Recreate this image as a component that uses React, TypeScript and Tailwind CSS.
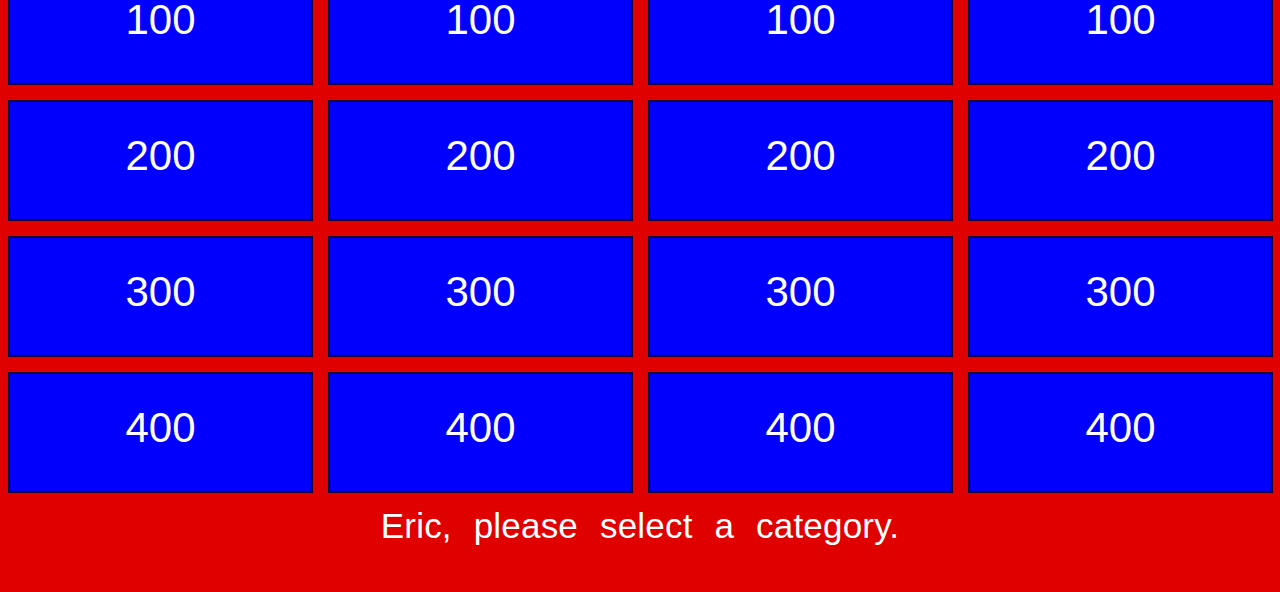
import React from "react";

const values = [100, 200, 300, 400];
const cols = [0, 1, 2, 3];

export default function App() {
  return (
    <div className="w-[1280px] h-[592px] overflow-hidden bg-[#e10000] font-['Liberation_Sans',Arial,sans-serif] text-white">
      <div className="-mt-[36px] pl-[8px] pr-[7px] grid grid-cols-4 gap-[15px] auto-rows-[121px]">
        {values.map((v) =>
          cols.map((c) => (
            <div
              key={`${v}-${c}`}
              className="bg-[#0000fc] border-2 border-[#1a0030] flex items-center justify-center pb-[9px]"
            >
              <span className="text-[42px] leading-none">{v}</span>
            </div>
          ))
        )}
      </div>
      <div className="mt-[15px] text-center text-[35px] leading-none [word-spacing:12px] tracking-[0.2px]">
        Eric, please select a category.
      </div>
    </div>
  );
}
